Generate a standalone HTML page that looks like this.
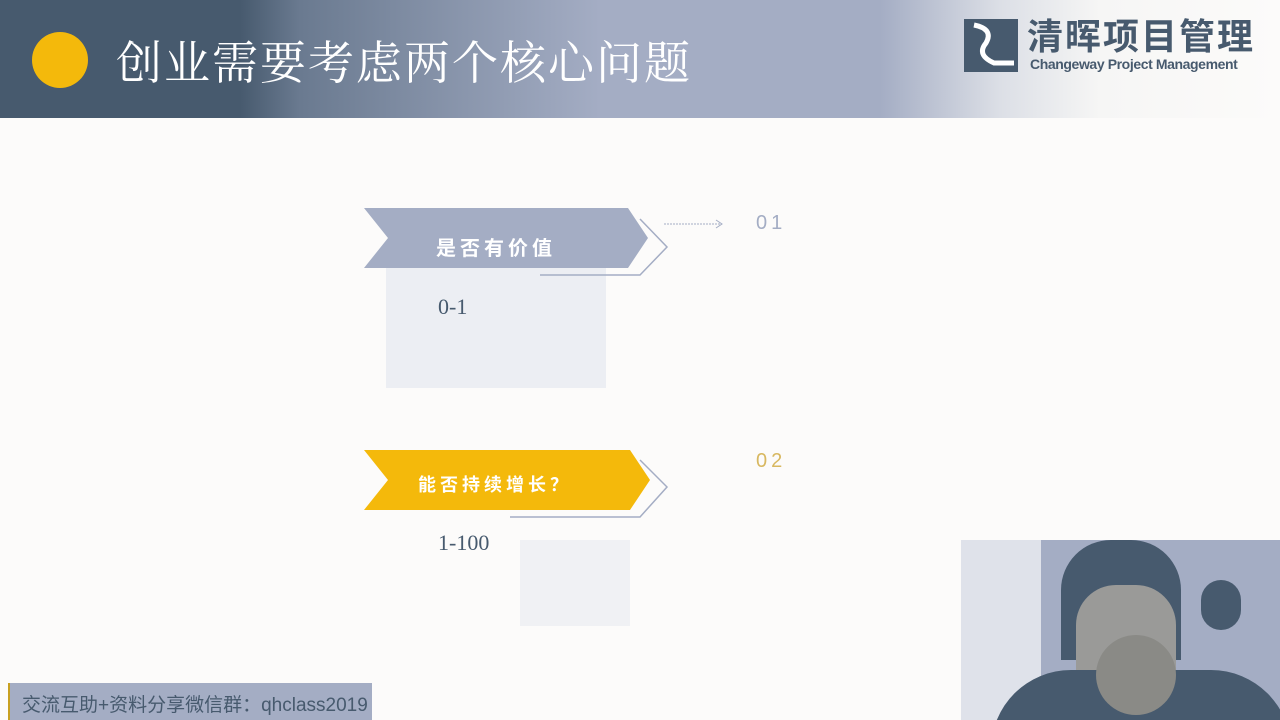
<!DOCTYPE html>
<html><head><meta charset="utf-8"><style>
body{margin:0;width:1280px;height:720px;background:#fcfbfa;position:relative;overflow:hidden;font-family:"Liberation Sans","Noto Sans CJK SC",sans-serif}
.hdr{position:absolute;left:0;top:0;width:1280px;height:118px;background:linear-gradient(90deg,#475a6e 0,#475a6e 240px,#6a7a90 300px,#a4adc4 600px,#a4adc4 880px,#dcdfe6 1000px,#f6f6f5 1100px,#fcfbfa 1280px)}
.dot{position:absolute;left:32px;top:32px;width:56px;height:56px;border-radius:50%;background:#f4b90b}
.title{position:absolute;left:116px;top:30px;font-family:"Noto Serif CJK SC",serif;font-size:46px;color:#fff;letter-spacing:2px;line-height:60px}
.t{position:absolute;color:#fff;font-weight:bold;font-size:20px;letter-spacing:4px}
</style></head><body>
<div class="hdr"></div>
<div class="dot"></div>
<div class="title">创业需要考虑两个核心问题</div>
<div style="position:absolute;left:964px;top:19px;width:54px;height:53px;background:#475a6e"></div>
<svg style="position:absolute;left:964px;top:19px" width="54" height="53"><path d="M10 6 Q30 10 22 24 Q12 36 30 44 L50 44" stroke="#fff" stroke-width="5" fill="none"/></svg>
<div style="position:absolute;left:1027px;top:16px;font-size:36px;font-weight:bold;color:#475a6e;letter-spacing:2px;line-height:42px;white-space:nowrap">清晖项目管理</div>
<div style="position:absolute;left:1030px;top:56px;font-size:14px;font-weight:bold;color:#475a6e;letter-spacing:-0.4px;white-space:nowrap">Changeway Project Management</div>

<div style="position:absolute;left:386px;top:268px;width:220px;height:120px;background:#eceef3"></div>
<svg style="position:absolute;left:360px;top:200px" width="420" height="330">
<polyline points="280,19 307,47 280,75 180,75" fill="none" stroke="#a4adc4" stroke-width="1.5"/>
<polygon points="4,8 268,8 288,38 268,68 4,68 28,38" fill="#a4adc4"/>
<line x1="304" y1="24" x2="362" y2="24" stroke="#a4adc4" stroke-dasharray="2 1"/>
<polyline points="356,20 362,24 356,28" fill="none" stroke="#a4adc4"/>
<polyline points="280,260 307,287 280,317 150,317" fill="none" stroke="#a4adc4" stroke-width="1.5"/>
<polygon points="4,250 270,250 290,280 270,310 4,310 28,280" fill="#f4b90b"/>
</svg>
<div class="t" style="left:436px;top:232px">是否有价值</div>
<div class="t" style="left:418px;top:471px;font-size:18px">能否持续增长？</div>
<div style="position:absolute;left:756px;top:212px;font-size:20px;color:#a4adc4;letter-spacing:4px">01</div>
<div style="position:absolute;left:756px;top:450px;font-size:20px;color:#d8b860;letter-spacing:4px">02</div>
<div style="position:absolute;left:438px;top:294px;font-size:22px;color:#475a6e;font-family:'Liberation Serif',serif">0-1</div>
<div style="position:absolute;left:438px;top:530px;font-size:22px;color:#475a6e;font-family:'Liberation Serif',serif">1-100</div>
<div style="position:absolute;left:520px;top:540px;width:110px;height:86px;background:#f0f1f4"></div>

<div style="position:absolute;left:961px;top:540px;width:319px;height:180px;background:#a4adc4;overflow:hidden">
<div style="position:absolute;left:0;top:0;width:80px;height:180px;background:#dfe2ea"></div>
<div style="position:absolute;left:100px;top:0;width:120px;height:120px;border-radius:50px 50px 0 0;background:#475a6e"></div>
<div style="position:absolute;left:115px;top:45px;width:100px;height:130px;border-radius:40px;background:#9a9a98"></div>
<div style="position:absolute;left:30px;top:130px;width:300px;height:80px;border-radius:80px 80px 0 0;background:#475a6e"></div>
<div style="position:absolute;left:135px;top:95px;width:80px;height:80px;border-radius:40px;background:#8a8a86"></div>
<div style="position:absolute;left:240px;top:40px;width:40px;height:50px;border-radius:20px;background:#475a6e"></div>
</div>

<div style="position:absolute;left:8px;top:683px;width:362px;height:37px;background:#a4adc4;border-left:2px solid #c8a020"></div>
<div style="position:absolute;left:22px;top:690px;font-size:19px;color:#475a6e">交流互助+资料分享微信群：qhclass2019</div>
</body></html>
